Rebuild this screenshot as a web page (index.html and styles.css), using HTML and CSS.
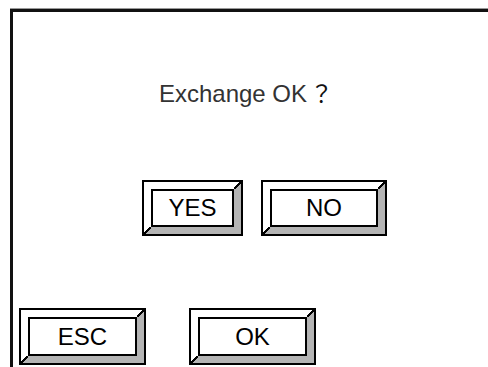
FILE: index.html
```html
<!DOCTYPE html>
<html lang="en">
<head>
    <meta charset="UTF-8">
    <meta name="viewport" content="width=device-width, initial-scale=1.0">
    <title>Exchange</title>
    <link rel="stylesheet" href="styles.css">
</head>
<body>

    <div class="frame">
        <p class="message">Exchange OK<span class="qmark">？</span></p>

        <div class="row row-choice">
            <div class="btn btn-yes"><div class="bevel"><div class="face">YES</div></div></div>
            <div class="btn btn-no"><div class="bevel"><div class="face">NO</div></div></div>
        </div>

        <div class="row row-bottom">
            <div class="btn btn-wide"><div class="bevel"><div class="face">ESC</div></div></div>
            <div class="btn btn-wide"><div class="bevel"><div class="face">OK</div></div></div>
        </div>
    </div>

</body>
</html>
```

FILE: styles.css
```css
html, body {
    margin: 0;
    height: 100%;
    overflow: hidden;
    background: #fff;
}

body {
    font-family: "Liberation Sans", Arial, sans-serif;
}

.frame {
    margin: 9px 0 0 10px;
    height: calc(100vh - 12px);
    border-top: 3px solid #111;
    border-left: 3px solid #111;
    box-shadow: 0 -1px 0 #999;
}

.message {
    margin: 0;
    padding: 66px 9px 0 0;
    font-size: 24px;
    line-height: 28px;
    text-align: center;
    color: #333;
}

.qmark {
    margin-left: 3px;
    font-family: "Noto Sans CJK JP", sans-serif;
    font-size: 23px;
    color: #111;
}

.row {
    display: flex;
}

.row-choice {
    margin-top: 72px;
    padding-left: 129px;
    gap: 18px;
}

.row-bottom {
    margin-top: 72px;
    padding-left: 6px;
    gap: 43px;
}

.btn {
    border: 2px solid #000;
    box-sizing: border-box;
    height: 56px;
}

.btn-yes { width: 101px; }
.btn-no { width: 126px; }
.btn-wide { width: 127px; height: 57px; }

.bevel {
    position: relative;
    height: 100%;
    box-sizing: border-box;
    border-style: solid;
    border-width: 7px;
    border-color: #fff #b4b4b4 #b4b4b4 #fff;
}

.bevel::before,
.bevel::after {
    content: "";
    position: absolute;
    width: 7px;
    height: 7px;
    background: linear-gradient(to bottom right, transparent calc(50% - 0.8px), #000 calc(50% - 0.8px), #000 calc(50% + 0.8px), transparent calc(50% + 0.8px));
}

.bevel::before {
    top: -7px;
    right: -7px;
}

.bevel::after {
    bottom: -7px;
    left: -7px;
}

.face {
    height: 100%;
    box-sizing: border-box;
    border: 2px solid #000;
    background: #fff;
    display: flex;
    align-items: center;
    justify-content: center;
    font-size: 24px;
    color: #000;
}
```
